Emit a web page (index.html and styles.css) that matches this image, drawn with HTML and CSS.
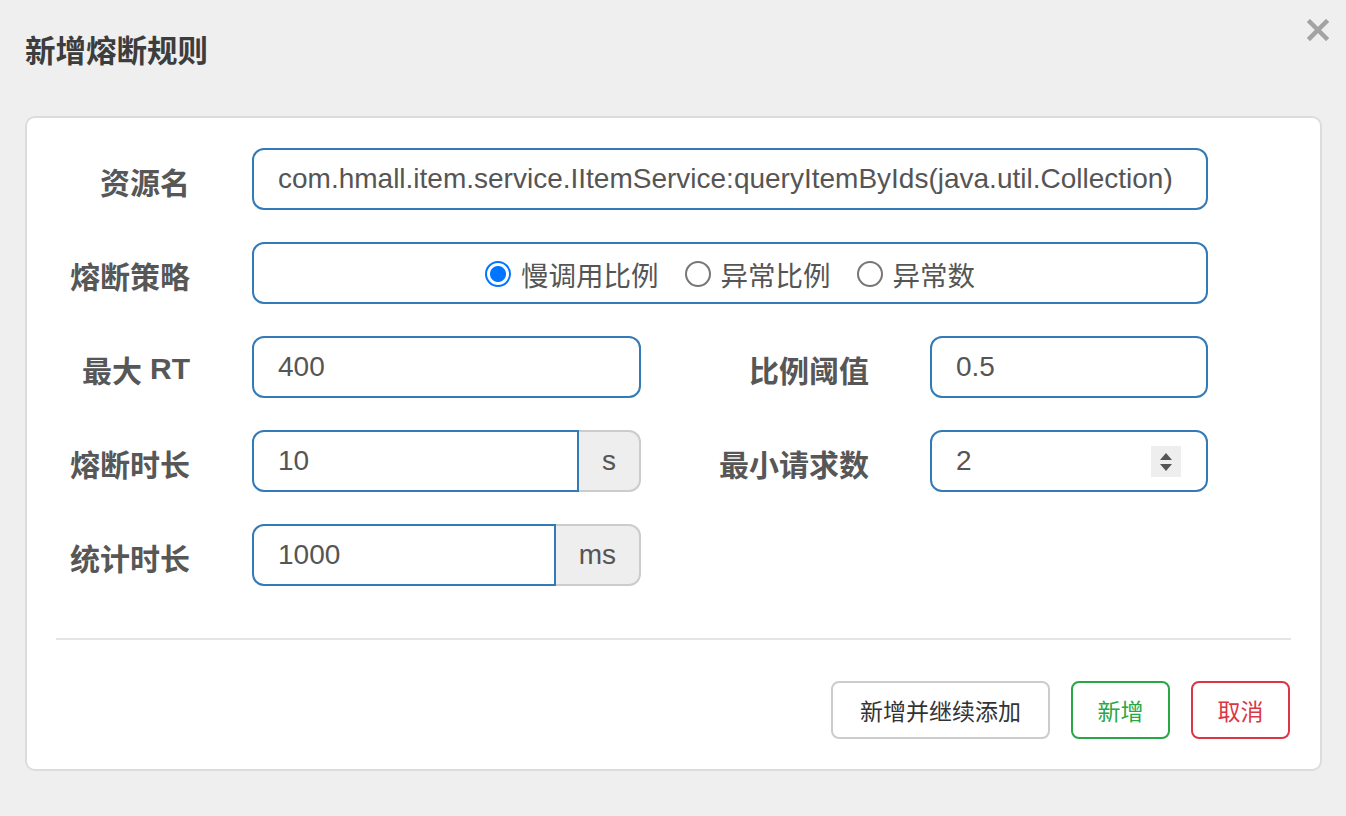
FILE: index.html
```html
<!DOCTYPE html>
<html lang="zh">
<head>
<meta charset="utf-8">
<title>新增熔断规则</title>
<link rel="stylesheet" href="styles.css">
</head>
<body>
<div class="dialog">
  <header class="dlg-head">
    <h2 class="title">新增熔断规则</h2>
    <button class="close" type="button" aria-label="关闭">
      <svg width="22" height="22" viewBox="0 0 22 22"><path d="M3 3 L19 19 M19 3 L3 19" stroke="#a3a3a3" stroke-width="4.5" stroke-linecap="square"/></svg>
    </button>
  </header>
  <div class="card">
    <div class="form">
      <label class="lbl">资源名</label>
      <div class="field span3">com.hmall.item.service.IItemService:queryItemByIds(java.util.Collection)</div>

      <label class="lbl">熔断策略</label>
      <div class="field span3 radios">
        <span class="opt"><span class="radio checked"></span>慢调用比例</span>
        <span class="opt"><span class="radio"></span>异常比例</span>
        <span class="opt"><span class="radio"></span>异常数</span>
      </div>

      <label class="lbl">最大 <span class="latin">RT</span></label>
      <div class="field">400</div>
      <label class="lbl lbl2">比例阈值</label>
      <div class="field">0.5</div>

      <label class="lbl">熔断时长</label>
      <div class="group">
        <div class="field grp-field">10</div>
        <span class="addon">s</span>
      </div>
      <label class="lbl lbl2">最小请求数</label>
      <div class="field">2
        <span class="spinner">
          <svg width="30" height="31" viewBox="0 0 30 31"><rect width="30" height="31" fill="#eeeeee"/><path d="M9 14 L15 7 L21 14 Z" fill="#555"/><path d="M9 18 L15 25 L21 18 Z" fill="#555"/></svg>
        </span>
      </div>

      <label class="lbl">统计时长</label>
      <div class="group">
        <div class="field grp-field">1000</div>
        <span class="addon">ms</span>
      </div>
    </div>
    <div class="divider"></div>
    <div class="footer">
      <button class="btn btn-default" type="button">新增并继续添加</button>
      <button class="btn btn-green" type="button">新增</button>
      <button class="btn btn-red" type="button">取消</button>
    </div>
  </div>
</div>
</body>
</html>
```
FILE: styles.css
```css
html, body {
  margin: 0;
  padding: 0;
}
body {
  background: #efefef;
  font-family: "Liberation Sans", "Noto Sans CJK SC", sans-serif;
  color: #555;
  width: 1346px;
  height: 816px;
  overflow: hidden;
}
.dlg-head {
  height: 116px;
  display: flex;
  justify-content: space-between;
  align-items: flex-start;
  padding: 0 17px 0 25px;
  box-sizing: border-box;
}
.title {
  margin: 34px 0 0;
  font-size: 30.5px;
  line-height: 31px;
  font-weight: bold;
  color: #3d3d3d;
  font-family: "Noto Sans CJK SC", sans-serif;
}
.close {
  margin-top: 19px;
  padding: 0;
  border: 0;
  background: none;
  width: 22px;
  height: 22px;
  display: block;
}
.close svg { display: block; }
.card {
  margin: 0 24px 0 25px;
  background: #fff;
  border: 2px solid #dcdcdc;
  border-radius: 10px;
  padding: 30px 0 30px;
}
.form {
  display: grid;
  grid-template-columns: 225px 389px 289px 278px;
  grid-auto-rows: 62px;
  row-gap: 32px;
}
.lbl {
  display: flex;
  align-items: center;
  justify-content: flex-end;
  padding-right: 62px;
  padding-top: 4px;
  font-size: 30px;
  font-weight: bold;
  color: #575757;
  font-family: "Noto Sans CJK SC", sans-serif;
  white-space: nowrap;
}
.lbl2 { padding-right: 61px; }
.lbl .latin {
  font-family: "Liberation Sans", sans-serif;
  margin-left: 8px;
}
.field {
  display: flex;
  align-items: center;
  border: 2px solid #337ab7;
  border-radius: 12px;
  padding: 0 24px;
  font-size: 28px;
  color: #555;
  white-space: nowrap;
  box-sizing: border-box;
  height: 62px;
}
.span3 { grid-column: 2 / 5; }
.radios {
  justify-content: center;
  gap: 26px;
  font-family: "Noto Sans CJK SC", sans-serif;
  font-size: 27.5px;
  padding-top: 2px;
}
.opt {
  display: flex;
  align-items: center;
  gap: 10px;
}
.radio {
  width: 26px;
  height: 26px;
  box-sizing: border-box;
  border: 2px solid #767676;
  border-radius: 50%;
  background: #fff;
  display: inline-block;
}
.radio.checked {
  border: 2px solid #0075ff;
  background: radial-gradient(circle, #0075ff 0 7.5px, #fff 8.5px);
}
.group {
  display: flex;
  height: 62px;
}
.grp-field {
  flex: 1;
  border-radius: 12px 0 0 12px;
}
.addon {
  display: flex;
  align-items: center;
  justify-content: center;
  padding: 0 23px;
  background: #eeeeee;
  border: 2px solid #cccccc;
  border-left: 0;
  border-radius: 0 12px 12px 0;
  font-size: 28px;
  color: #555;
}
.spinner {
  margin-left: auto;
  margin-right: 1px;
  display: block;
  height: 31px;
}
.spinner svg { display: block; }
.divider {
  margin: 52px 29px 0;
  height: 2px;
  background: #e5e5e5;
}
.footer {
  display: flex;
  justify-content: flex-end;
  gap: 21px;
  padding: 41px 30px 0;
}
.btn {
  height: 58px;
  padding: 0 25px;
  background: #fff;
  border: 2px solid #ccc;
  border-radius: 8px;
  font-size: 23px;
  font-family: "Noto Sans CJK SC", sans-serif;
  color: #333;
}
.btn-green {
  border-color: #28a745;
  color: #28a745;
  width: 99px;
  padding: 0;
}
.btn-red {
  border-color: #dc3545;
  color: #dc3545;
  width: 99px;
  padding: 0;
}
.btn-default { width: 219px; padding: 0; }
```
